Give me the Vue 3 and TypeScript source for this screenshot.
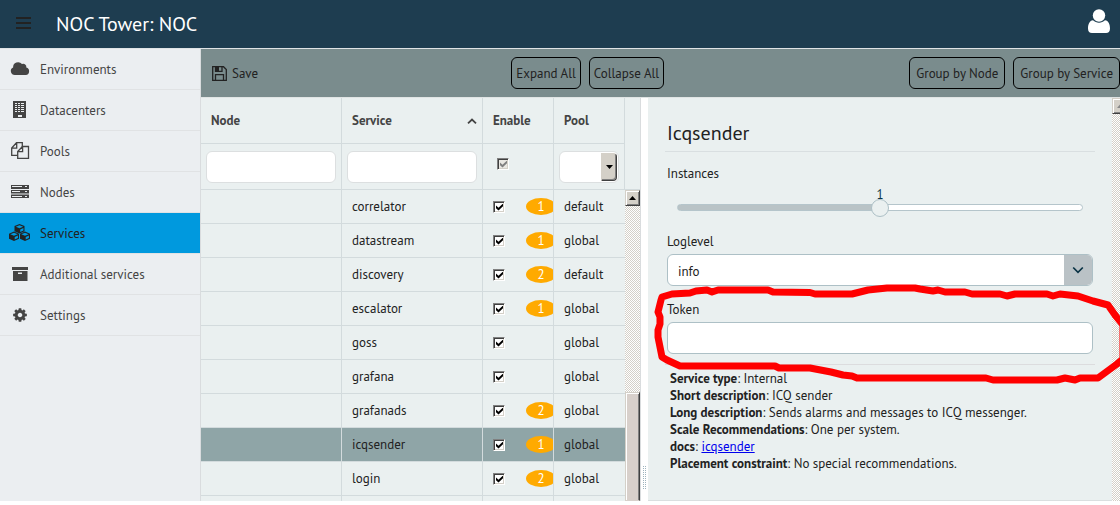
<script setup lang="ts">
import { ref } from 'vue'

interface NavItem { label: string; icon: string }
interface ServiceRow { name: string; count: number | null; pool: string; enabled: boolean }
interface InfoLine { term: string; text: string; href?: string }

const nav: NavItem[] = [
  { label: 'Environments', icon: 'cloud' },
  { label: 'Datacenters', icon: 'building' },
  { label: 'Pools', icon: 'copy' },
  { label: 'Nodes', icon: 'server' },
  { label: 'Services', icon: 'cubes' },
  { label: 'Additional services', icon: 'archive' },
  { label: 'Settings', icon: 'cog' },
]
const activeNav = ref('Services')

const rows = ref<ServiceRow[]>([
  { name: 'correlator', count: 1, pool: 'default', enabled: true },
  { name: 'datastream', count: 1, pool: 'global', enabled: true },
  { name: 'discovery', count: 2, pool: 'default', enabled: true },
  { name: 'escalator', count: 1, pool: 'global', enabled: true },
  { name: 'goss', count: null, pool: 'global', enabled: true },
  { name: 'grafana', count: null, pool: 'global', enabled: true },
  { name: 'grafanads', count: 2, pool: 'global', enabled: true },
  { name: 'icqsender', count: 1, pool: 'global', enabled: true },
  { name: 'login', count: 2, pool: 'global', enabled: true },
])
const selected = ref('icqsender')

const instances = ref(1)
const loglevel = ref('info')
const token = ref('')

const info: InfoLine[] = [
  { term: 'Service type', text: 'Internal' },
  { term: 'Short description', text: 'ICQ sender' },
  { term: 'Long description', text: 'Sends alarms and messages to ICQ messenger.' },
  { term: 'Scale Recommendations', text: 'One per system.' },
  { term: 'docs', text: 'icqsender', href: '#icqsender' },
  { term: 'Placement constraint', text: 'No special recommendations.' },
]
</script>

<template>
  <div class="page">
    <header class="topbar">
      <button class="icon-btn" type="button" aria-label="Menu">
        <svg width="16" height="14" viewBox="0 0 16 14"><path d="M0 0h15v2H0zM0 5h15v2H0zM0 10h15v2H0z" fill="#222" /></svg>
      </button>
      <h1>NOC Tower: NOC</h1>
      <button class="icon-btn user" type="button" aria-label="Account">
        <svg width="22" height="25" viewBox="0 0 22 25" fill="#fff">
          <path d="M5 11.300C1.500 11.500 0 15.500 0 19.500c0 3 1.500 4.500 4 4.500h14c2.500 0 4-1.500 4-4.500 0-4-1.500-8-5-8.200-1.700 1.500-3.700 2.400-6 2.400s-4.300-.9-6-2.400z" />
          <circle cx="11" cy="6.500" r="6.200" />
        </svg>
      </button>
    </header>

    <div class="body">
      <nav class="side">
        <a v-for="n in nav" :key="n.label" href="#" :class="{ active: n.label === activeNav }" @click.prevent="activeNav = n.label">
          <svg width="24" height="20" viewBox="0 0 24 20" fill="currentColor">
            <path v-if="n.icon === 'cloud'" d="M7 15a4 4 0 0 1-1.900-7.600A5 5 0 0 1 14 4.100a3 3 0 0 1 4.300 3.300A3.900 3.900 0 0 1 17.800 15z" />
            <path v-else-if="n.icon === 'building'" fill-rule="evenodd" d="M5 0h13v17H5zM7 2v1h2V2zM10 2v1h2V2zM13 2v1h3V2zM7 4v1h2V4zM10 4v1h2V4zM13 4v1h3V4zM7 6v1h2V6zM10 6v1h2V6zM13 6v1h3V6zM7 8v1h2V8zM10 8v1h2V8zM13 8v1h3V8zM7 10v1h2v-1zM10 10v1h2v-1zM13 10v1h3v-1zM10 14v2h4v-2z" />
            <g v-else-if="n.icon === 'copy'" fill="none" stroke="currentColor" stroke-width="1.300">
              <path d="M9.500 13.300H3.700V6L8.500.700h5.800v4.200M8.700.900v5.300H3.900" />
              <path d="M9.700 16.400V9.500l4.800-5h6v11.900zM14.600 4.700v5H9.900" />
            </g>
            <path v-else-if="n.icon === 'server'" fill-rule="evenodd" d="M3 2h18v4H3zM4 3v1h10V3zM17 3v1h2V3zM3 7h18v3.500H3zM4 8v1h8V8zM17 8v1h2V8zM3 11.500h18V15H3zM4 13v1h10v-1zM17 13v1h2v-1z" />
            <g v-else-if="n.icon === 'cubes'">
              <path d="M11.500 0l5 2.100v5.200l-5 2.200-5-2.200V2.100zM6 7.500l5 2.200v5L6 17l-5-2.300v-5zM17 7.500l5 2.200v5L17 17l-5-2.300v-5z" />
              <path class="facet" d="M11.500 1.300l3.700 1.500-3.700 1.500-3.700-1.500zM12.200 5.400l3.200-1.300v2.500l-3.200 1.400zM6 8.800l3.700 1.500L6 11.800l-3.700-1.500zM6.700 12.900l3.200-1.300V14l-3.200 1.400zM17 8.800l3.700 1.500-3.700 1.500-3.700-1.500zM17.700 12.900l3.200-1.300V14l-3.200 1.400z" />
            </g>
            <path v-else-if="n.icon === 'archive'" fill-rule="evenodd" d="M4 2h16v3H4zM5 6h14.500v10H5zM10 7.500V9h4V7.500z" />
            <svg v-else x="4" y="1" width="16" height="16" viewBox="0 0 1792 1792"><path d="M1152 896q0-106-75-181t-181-75-181 75-75 181 75 181 181 75 181-75 75-181zm512-109v222q0 12-8 23t-20 13l-185 28q-19 54-39 91 35 50 107 138 10 12 10 25t-9 23q-27 37-99 108t-94 71q-12 0-26-9l-138-108q-44 23-91 38-16 136-29 186-7 28-36 28h-222q-14 0-24.500-8.500t-11.500-21.500l-28-184q-49-16-90-37l-141 107q-10 9-25 9-14 0-25-11-126-114-165-168-7-10-7-23 0-12 8-23 15-21 51-66.500t54-70.500q-27-50-41-99l-183-27q-13-2-21-12.500t-8-23.500v-222q0-12 8-23t19-13l186-28q14-46 39-92-40-57-107-138-10-12-10-24 0-10 9-23 26-36 98.500-107.500t94.500-71.500q13 0 26 10l138 107q44-23 91-38 16-136 29-186 7-28 36-28h222q14 0 24.500 8.500t11.500 21.500l28 184q49 16 90 37l142-107q9-9 24-9 13 0 25 10 129 119 165 170 7 8 7 22 0 12-8 23-15 21-51 66.500t-54 70.500q26 50 41 98l183 28q13 2 21 12.500t8 23.500z" /></svg>
          </svg>
          <span>{{ n.label }}</span>
        </a>
      </nav>

      <main class="content">
        <div class="toolbar">
          <button class="save" type="button">
            <svg width="15" height="15" viewBox="0 0 15 15" fill="none" stroke="#222" stroke-width="1.300">
              <path d="M.700.700h10.800l2.800 2.800v10.800H.700z" />
              <path d="M3.500 14.300V8.700h8v5.600" />
              <path d="M3.500.700v4.600h6.500V.700" />
              <path d="M4 1h3v4H4z" fill="#222" stroke="none" />
            </svg>
            Save
          </button>
          <span class="grow"></span>
          <button class="outlined" type="button">Expand All</button>
          <button class="outlined" type="button">Collapse All</button>
          <span class="grow"></span>
          <button class="outlined group" type="button">Group by Node</button>
          <button class="outlined group" type="button">Group by Service</button>
        </div>

        <div class="panes">
          <section class="grid">
            <table>
              <colgroup><col class="c-wide" /><col class="c-wide" /><col class="c-slim" /><col class="c-slim" /></colgroup>
              <thead>
                <tr>
                  <th>Node</th>
                  <th><span class="sorted">Service<svg width="10" height="6" viewBox="0 0 10 6" fill="none" stroke="#444" stroke-width="1.800"><path d="M1 5.300L5 1.500l4 3.800" /></svg></span></th>
                  <th>Enable</th>
                  <th>Pool</th>
                </tr>
                <tr class="filters">
                  <td><input class="filter" type="text" aria-label="Filter by node" /></td>
                  <td><input class="filter" type="text" aria-label="Filter by service" /></td>
                  <td class="check-cell"><input class="check" type="checkbox" checked disabled aria-label="Filter by enable" /></td>
                  <td>
                    <div class="mini-select">
                      <select aria-label="Filter by pool"><option></option><option>default</option><option>global</option></select>
                      <span class="mini-arrow"><svg width="7" height="4" viewBox="0 0 7 4"><path d="M0 0h7L3.500 4z" /></svg></span>
                    </div>
                  </td>
                </tr>
              </thead>
              <tbody>
                <tr v-for="r in rows" :key="r.name" :class="{ selected: r.name === selected }" @click="selected = r.name">
                  <td></td>
                  <td>{{ r.name }}</td>
                  <td>
                    <div class="enable">
                      <input v-model="r.enabled" class="check" type="checkbox" :aria-label="'Enable ' + r.name" />
                      <span v-if="r.count" class="badge">{{ r.count }}</span>
                    </div>
                  </td>
                  <td>{{ r.pool }}</td>
                </tr>
                <tr><td></td><td></td><td></td><td></td></tr>
              </tbody>
            </table>
            <div class="scroll-col">
              <div class="scroll-head"></div>
              <div class="scrollbar">
                <div class="scroll-btn"><svg width="7" height="4" viewBox="0 0 7 4"><path d="M0 4h7L3.500 0z" /></svg></div>
                <div class="scroll-gap"></div>
                <div class="scroll-thumb"></div>
              </div>
            </div>
          </section>

          <div class="splitter"><span class="grip"></span></div>

          <section class="detail">
            <h2>Icqsender</h2>
            <form class="form" @submit.prevent>
              <label for="instances">Instances</label>
              <div class="slider">
                <output for="instances">{{ instances }}</output>
                <input id="instances" v-model.number="instances" type="range" min="0" max="2" :style="{ '--fill': instances * 50 + '%' }" />
              </div>
              <label for="loglevel">Loglevel</label>
              <div class="combo">
                <select id="loglevel" v-model="loglevel"><option>debug</option><option>info</option><option>warning</option></select>
                <span class="combo-arrow"><svg width="12" height="8" viewBox="0 0 12 8" fill="none" stroke="#0a3345" stroke-width="1.700"><path d="M1.200 1.500L6 6.300l4.800-4.800" /></svg></span>
              </div>
              <label for="token">Token</label>
              <input id="token" v-model="token" class="field" type="text" />
            </form>
            <div class="info">
              <p v-for="i in info" :key="i.term"><b>{{ i.term }}</b>: <a v-if="i.href" :href="i.href">{{ i.text }}</a><template v-else>{{ i.text }}</template></p>
            </div>
          </section>
          <div class="scrollbar outer"><div class="scroll-btn"><svg width="7" height="4" viewBox="0 0 7 4"><path d="M0 4h7L3.500 0z" fill="#888" /></svg></div></div>
        </div>
      </main>
    </div>

    <svg class="marker" width="1120" height="505" viewBox="0 0 1120 505" fill="none" stroke="#f00" stroke-width="7" stroke-linejoin="round" stroke-linecap="round">
      <path d="M662 297L672 294 690 293 696 291 707 290 712 292 718 290H768L773 292 810 292.500 815 294H852L868 290 887 288H915L920 289 933 291 938 290 945 292 965 292 972 294H1000L1007 296 1015 294H1047L1053 296 1060 294 1078 296 1093 301 1108 305 1115 315 1123 325V359L1117 364 1098 378H1080L1075 380 1065 378 1057 380H993L986 378H857L852 376 843 375 831 372 810 368H779L775 366H680L667 360 662 357 660 347 658 337 658 330 660 324 660 317 658 312 661 300z" />
    </svg>
  </div>
</template>

<style>
body { background: #fff; }
</style>

<style scoped>
* { box-sizing: border-box; }
.page {
  position: relative;
  display: flex;
  flex-direction: column;
  height: 100vh;
  padding-bottom: 4px;
  overflow: hidden;
  font: 13px/21px "PT Sans", "Noto Sans", sans-serif;
  color: #222;
}
button, input, select { font: inherit; color: inherit; margin: 0; }
.topbar {
  flex: none;
  display: flex;
  align-items: center;
  height: 49px;
  padding: 0 10px 0 16px;
  background: #1e3d50;
  border-bottom: 1px solid #dfe3e5;
}
.icon-btn { display: flex; padding: 0; border: 0; background: none; }
h1 { flex: 1; margin: 0 0 0 24px; font-size: 20px; line-height: 24px; font-weight: 400; color: #fff; }
.user { padding-bottom: 5px; }

.body { flex: 1; display: flex; min-height: 0; }
.side { flex: none; width: 201px; background: #ebeef1; border-right: 1px solid #d9dcde; }
.side a {
  display: flex;
  align-items: center;
  gap: 8px;
  height: 41px;
  padding: 1px 0 0 8px;
  border-bottom: 1px solid #e0e2e4;
  color: #444;
  text-decoration: none;
}
.side a.active { background: #0099de; color: #222; }
.facet { fill: #ebeef1; }
.active .facet { fill: #0099de; }

.content { flex: 1; display: flex; flex-direction: column; min-width: 0; }
.toolbar {
  flex: none;
  display: flex;
  align-items: center;
  gap: 8px;
  height: 49px;
  padding-left: 11px;
  background: #7a8c8d;
  border-bottom: 1px solid #e0e4e4;
}
.save { display: flex; align-items: center; gap: 5px; padding: 0 8px 0 0; border: 0; background: none; }
.grow { flex: 1; }
.outlined { flex: none; height: 32px; padding: 1px 4px 0; border: 1px solid #000; border-radius: 6px; background: none; white-space: nowrap; }
.outlined.group { padding: 1px 6px 0; }

.panes { flex: 1; display: flex; min-height: 0; background: #eaf0f0; }
.grid { flex: none; display: flex; width: 439px; overflow: hidden; }
table { flex: none; width: 424px; table-layout: fixed; border-collapse: separate; border-spacing: 0; align-self: flex-start; }
.c-wide { width: 141px; }
.c-slim { width: 71px; }
th, td { height: 34px; padding: 0 0 0 10px; border: 0 solid #d3dbdd; border-width: 0 1px 1px 0; text-align: left; overflow: hidden; }
th { height: 46px; line-height: 20px; color: #444; }
.filters td { height: 46px; padding: 0 5px; }
.sorted { display: flex; align-items: center; justify-content: space-between; padding-right: 5px; }
tbody td:last-child { border-right: 0; }
.filter { display: block; width: 100%; height: 32px; padding: 0 8px; border: 1px solid #dcdfe0; border-radius: 6px; background: #fff; }
.filters .check-cell { padding: 0 0 6px 14px; }
.check {
  appearance: none;
  display: block;
  flex: none;
  width: 12px;
  height: 12px;
  border: 1px solid;
  border-color: #808080 #fff #fff #808080;
  background: #fff;
  box-shadow: inset 1px 1px #404040, inset -1px -1px #d4d0c8;
}
.check:checked::before {
  content: "";
  display: block;
  width: 7px;
  height: 7px;
  margin: 2px;
  background: #000;
  clip-path: polygon(0 29%, 36% 62%, 100% 0, 100% 40%, 36% 100%, 0 68%);
}
.check:disabled { background: #e9e7e2; }
.check:disabled::before { background: #808080; }
.enable { display: flex; align-items: center; gap: 21px; overflow: hidden; }
.badge { flex: none; width: 30px; height: 17px; border-radius: 50%; background: #ffaa00; color: #fff; line-height: 17px; text-align: center; }
.selected td { background: #8fa5a7; }
.mini-select { display: flex; width: 60px; height: 32px; padding: 1px; border: 1px solid #dcdfe0; border-radius: 6px; background: #fff; overflow: hidden; }
.mini-select select { flex: 1; min-width: 0; appearance: none; border: 0; background: none; }
.mini-arrow { flex: none; display: flex; align-items: center; justify-content: center; width: 16px; border: 1px solid; border-color: #d4d0c8 #404040 #404040 #d4d0c8; border-radius: 0 4px 4px 0; background: #d4d0c8; box-shadow: inset -1px -1px #808080; pointer-events: none; }

.scroll-col { flex: none; display: flex; flex-direction: column; width: 15px; }
.scroll-head { flex: none; height: 92px; border-bottom: 1px solid #d3dbdd; }
.scrollbar { flex: 1; display: flex; flex-direction: column; background: repeating-conic-gradient(#d4d0c8 0 25%, #fff 0 50%) 0 0 / 2px 2px; }
.scroll-btn { flex: none; display: flex; align-items: center; justify-content: center; height: 16px; border: 1px solid; border-color: #d4d0c8 #404040 #404040 #d4d0c8; background: #d4d0c8; box-shadow: inset 1px 1px #fff, inset -1px -1px #808080; }
.scroll-gap { flex: 187; }
.scroll-thumb { flex: 108; border: 1px solid; border-color: #d4d0c8 #404040 transparent #d4d0c8; background: #d8d0cb; box-shadow: inset 1px 1px #fff, inset -1px 0 #808080; }
.outer { flex: none; width: 8px; overflow: hidden; }
.outer .scroll-btn { width: 16px; }

.splitter { flex: none; display: flex; flex-direction: column; align-items: center; justify-content: flex-end; width: 8px; padding-bottom: 11px; border-left: 1px solid #d9dcde; background: #fff; }
.grip { width: 4px; height: 24px; background: radial-gradient(circle at 0 0, #9db3bd 1px, transparent 1px) 0 0 / 2px 2px; }

.detail { flex: 1; min-width: 0; padding: 17px 17px 0; overflow: hidden; border-bottom: 1px solid #dadfe0; }
h2 { margin: 0; padding-left: 2px; border-bottom: 1px solid #d9dfe1; font-size: 20px; line-height: 36px; font-weight: 400; }
.form { display: flex; flex-direction: column; padding: 0 2px 10px; border-bottom: 1px solid #dcdcde; }
.form label { align-self: flex-start; margin: 11px 0 2px; }
.slider { display: flex; flex-direction: column; margin: 0 10px; }
.slider output { align-self: center; line-height: 18px; color: #0a3345; }
.slider input {
  appearance: none;
  width: 100%;
  height: 7px;
  margin: 0 0 9px;
  border: 1px solid #b5c5cb;
  border-radius: 4px;
  background: linear-gradient(to right, #b9c3c6 var(--fill), #fff var(--fill));
}
.slider input::-webkit-slider-thumb { appearance: none; width: 18px; height: 18px; border: 1px solid #adc0c6; border-radius: 50%; background: #eaf0f0; }
.combo { display: flex; height: 32px; margin-bottom: 2px; border: 1px solid #adc0c6; border-radius: 6px; background: #fff; overflow: hidden; }
.combo select { flex: 1; appearance: none; padding: 2px 10px 0; border: 0; background: none; }
.combo-arrow { flex: none; display: flex; align-items: center; justify-content: center; width: 28px; background: #bac2c6; pointer-events: none; }
.field { width: 100%; height: 32px; padding: 0 10px; border: 1px solid #adc0c6; border-radius: 6px; background: #fff; }
.info { padding: 5px; }
.info p { margin: 0; line-height: 17px; }
.info a { color: #00e; }

.marker { position: absolute; top: 0; left: 0; pointer-events: none; }
</style>
